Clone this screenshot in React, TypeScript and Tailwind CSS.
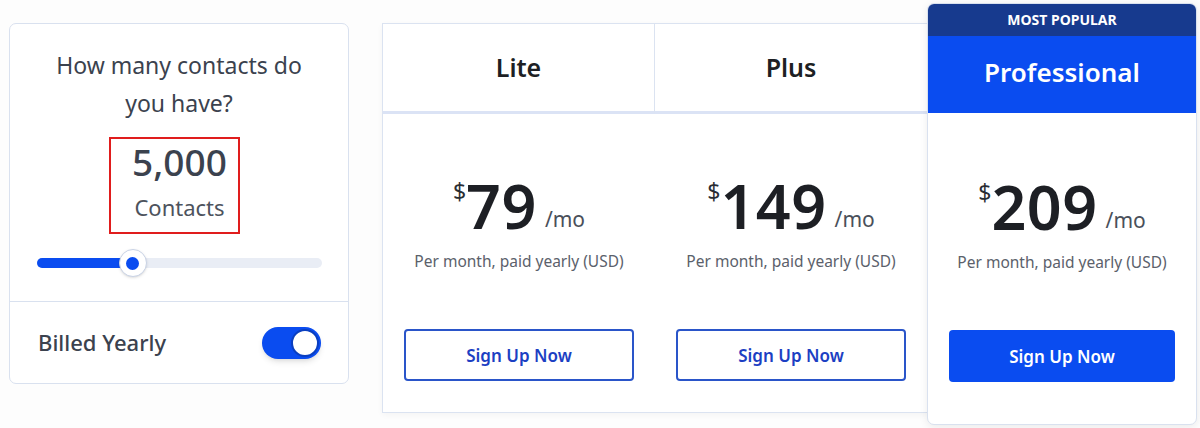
import React from "react";

const font = { fontFamily: '"Noto Sans", "Open Sans", Arial, sans-serif' };

interface Plan {
  name: string;
  price: string;
}

const plans: Plan[] = [
  { name: "Lite", price: "79" },
  { name: "Plus", price: "149" },
];

const Price = ({ price }: { price: string }) => (
  <div className="flex flex-col items-center">
    <div className="flex items-start text-[#1d1f24]">
      <span className="mt-[4px] text-[23px] leading-none text-[#2a2d33]">$</span>
      <span className="text-[61px] font-semibold leading-[60px] tracking-[0.5px]">{price}</span>
      <span className="ml-[8px] mt-[33px] text-[21px] leading-none text-[#4a505a]">/mo</span>
    </div>
    <div className="mt-[14px] text-[15.5px] text-[#5b616b]">Per month, paid yearly (USD)</div>
  </div>
);

export default function App() {
  return (
    <div className="min-h-[428px] w-[1200px] bg-[#fdfdfd]" style={font}>
      <div className="flex items-start pl-[9px] pt-[3px]">
        {/* Contacts card */}
        <div className="mt-[20px] flex h-[361px] w-[340px] flex-col rounded-[7px] border border-[#d9e1ef] bg-white">
          <div className="flex h-[278px] flex-col items-center border-b border-[#d9e1ef]">
            <div className="mt-[22px] w-[270px] text-center text-[23px] leading-[38px] text-[#3b424e]">
              How many contacts do you have?
            </div>
            <div className="ml-[-9px] mt-[15px] flex h-[97px] w-[131px] flex-col items-center border-[2px] border-[#e01d1d] pl-[10px]">
              <div className="mt-[1px] text-[37px] font-medium leading-[44px] text-[#3b424e]">5,000</div>
              <div className="mt-[8px] text-[22px] leading-[30px] text-[#4d535d]">Contacts</div>
            </div>
            <div className="relative mt-[24px] h-[10px] w-[285px] rounded-full bg-[#e9edf5]">
              <div className="h-[10px] w-[100px] rounded-full bg-[#0a4cf0]" />
              <div className="absolute left-[82px] top-[-9px] flex h-[28px] w-[28px] items-center justify-center rounded-full border border-[#c9d3e6] bg-white shadow-sm">
                <div className="h-[13px] w-[13px] rounded-full bg-[#0a4cf0]" />
              </div>
            </div>
          </div>
          <div className="flex flex-1 items-center justify-between pl-[28px] pr-[27px]">
            <span className="text-[22px] font-medium text-[#3b424e]">Billed Yearly</span>
            <div className="flex h-[32px] w-[59px] items-center justify-end rounded-full bg-[#0a4cf0] pr-[2px] shadow-md">
              <div className="h-[28px] w-[28px] rounded-full border-[2px] border-[#0a3fc0] bg-white" />
            </div>
          </div>
        </div>

        {/* Lite + Plus */}
        <div className="ml-[33px] mt-[20px] flex border border-[#dbe3f1] bg-white shadow-[0_2px_6px_rgba(0,0,0,0.04)]">
          {plans.map((p, i) => (
            <div key={p.name} className="flex w-[272px] flex-col">
              <div
                className={`flex h-[90px] items-center justify-center border-b-[3px] border-[#dbe3f5] ${
                  i === 0 ? "border-r border-r-[#dbe3f1]" : ""
                }`}
              >
                <span className="text-[25px] font-semibold text-[#1d1f24]">{p.name}</span>
              </div>
              <div className="flex h-[298px] flex-col items-center">
                <div className="mt-[62px]">
                  <Price price={p.price} />
                </div>
                <button className="mt-[56px] h-[52px] w-[230px] rounded-[4px] border-[2px] border-[#2a55c9] bg-white text-[17px] font-semibold text-[#1c3fc3]">
                  Sign Up Now
                </button>
              </div>
            </div>
          ))}
        </div>

        {/* Professional */}
        <div className="ml-[-1px] flex h-[422px] w-[270px] flex-col overflow-hidden rounded-[7px] border border-[#d9e1ef] bg-white shadow-[0_2px_8px_rgba(0,0,0,0.08)]">
          <div className="flex h-[32px] items-center justify-center bg-[#173a8e] pb-[2px] text-[14px] font-bold text-white">
            MOST POPULAR
          </div>
          <div className="flex h-[77px] items-center justify-center bg-[#0a4cf0] pb-[4px]">
            <span className="text-[26px] font-semibold text-white">Professional</span>
          </div>
          <div className="flex flex-1 flex-col items-center">
            <div className="mt-[64px]">
              <Price price="209" />
            </div>
            <button className="mt-[56px] h-[52px] w-[226px] rounded-[4px] bg-[#0a4cf0] text-[17px] font-semibold text-white">
              Sign Up Now
            </button>
          </div>
        </div>
      </div>
    </div>
  );
}
